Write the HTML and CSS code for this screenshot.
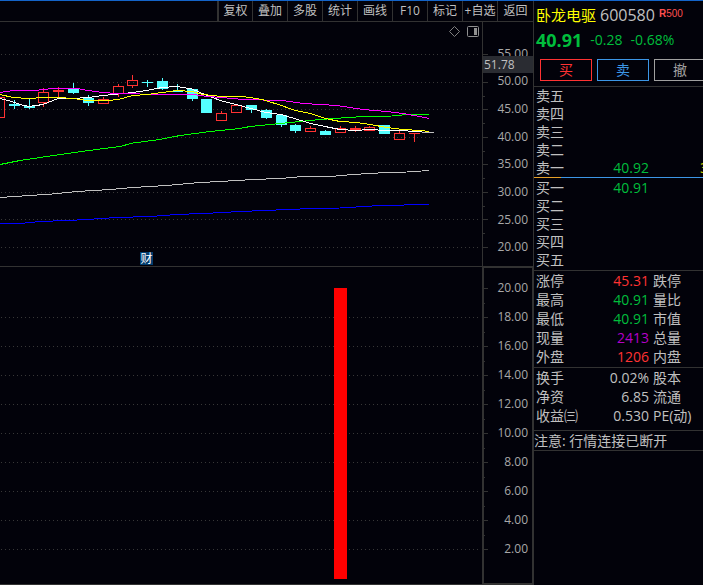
FILE: index.html
```html
<!DOCTYPE html>
<html lang="zh-CN">
<head>
    <meta charset="UTF-8">
    <meta name="viewport" content="width=device-width, initial-scale=1.0">
    <title>卧龙电驱 600580</title>
    <link rel="stylesheet" href="styles.css">
</head>
<body>
    <div class="app">
        <main class="charts">
            <nav class="toolbar">
                <button type="button">复权</button>
                <button type="button">叠加</button>
                <button type="button">多股</button>
                <button type="button">统计</button>
                <button type="button">画线</button>
                <button type="button">F10</button>
                <button type="button">标记</button>
                <button type="button">+自选</button>
                <button type="button">返回</button>
            </nav>

            <section class="pane pane-price">
                <div class="plot">
                    <svg id="priceChart" class="chart" viewBox="0 22 482 244" preserveAspectRatio="none">
                        <path class="grid-line" d="M1 54.5H479M1 82.5H479M1 109.5H479M1 137.5H479M1 164.5H479M1 192.5H479M1 219.5H479M1 247.5H479"/>
                        <g id="candles"></g>
                        <polyline class="ma ma-blue" points="0,223.5 20,223.5 40,221.5 67,220.5 87,219.5 117,217.5 150,216.5 177,214.5 213,213 240,211.5 300,209 340,208 380,205.5 429,204.5"/>
                        <polyline class="ma ma-gray" points="0,197.5 30,195.5 52,194 77,191.5 110,189.5 133,187.5 167,185.5 200,182.5 220,181.5 253,179.5 280,178.5 303,176.5 330,176.5 353,174.5 387,172.5 407,172 429,170.5"/>
                        <polyline class="ma ma-green" points="0,164.5 20,160.5 40,157.5 60,154.5 100,149 120,146.5 133,143 160,139.5 180,135.5 210,131.5 240,128.5 250,126.5 280,123.5 320,119.5 363,116.5 392,116 407,114.5 429,114.5"/>
                        <polyline class="ma ma-white" points="0,98.5 10,101 20,104.5 29,106.5 43,104.5 58,98.5 73,98.5 88,97.5 103,95.5 118,94 133,92.5 147,90.5 162,87.5 177,86.5 192,89 207,95.5 222,101 236,104.5 251,108.5 266,112.5 281,114.5 296,119 311,123.5 325,126.5 340,129.5 355,130.5 370,129.5 385,130.5 400,130.5 415,131.5 429,132.5"/>
                        <polyline class="ma ma-magenta" points="0,92.5 13,90.5 35,90.5 52,88.5 77,88.5 88,90.5 103,92.5 117,93.5 137,93.5 143,94.5 193,94.5 207,96.5 222,97.5 243,99.5 283,100.5 303,103.5 337,105.5 363,109.5 387,111.5 403,113.5 417,116 429,118.5"/>
                        <polyline class="ma ma-yellow" points="0,94.5 13,97.5 29,98.5 43,97.5 58,97.5 73,98.5 88,100.5 108,100.5 118,99.5 133,95.5 147,94.5 162,92.5 177,90.5 192,91.5 203,94.5 222,96.5 243,96.5 262,99.5 280,105 295,110.5 311,113.5 325,118.5 340,121.5 357,122.5 370,124.5 387,127.5 403,129.5 420,130.5 429,131.5"/>
                        <path class="ma ma-gray" d="M422 132.5H434"/>
                    </svg>
                    <div class="plot-tools">
                        <button type="button" aria-label="指标">
                            <svg width="11" height="11" viewBox="0 0 11 11"><path d="M5.5 .5l5 5-5 5-5-5z" fill="none" stroke="#808080"/></svg>
                        </button>
                        <button type="button" aria-label="侧栏">
                            <svg width="12" height="11" viewBox="0 0 12 11"><rect x=".5" y=".5" width="11" height="10" rx="1" fill="none" stroke="#909090"/><path d="M7 2h3v7H7z" fill="#909090"/></svg>
                        </button>
                    </div>
                    <span class="event">财</span>
                </div>
                <div class="axis">
                    <svg class="ticks" viewBox="0 22 5 244" preserveAspectRatio="none">
                        <path d="M0 54.5H5M0 82.5H5M0 109.5H5M0 137.5H5M0 164.5H5M0 192.5H5M0 219.5H5M0 247.5H5M0 96.5H2M0 123.5H2M0 151.5H2M0 178.5H2M0 206.5H2M0 233.5H2"/>
                    </svg>
                    <ul class="scale">
                        <li>55.00</li>
                        <li>50.00</li>
                        <li>45.00</li>
                        <li>40.00</li>
                        <li>35.00</li>
                        <li>30.00</li>
                        <li>25.00</li>
                        <li>20.00</li>
                    </ul>
                    <span class="cursor-price">51.78</span>
                </div>
            </section>

            <section class="pane pane-indicator">
                <div class="plot">
                    <svg class="chart" viewBox="0 267 482 317" preserveAspectRatio="none">
                        <path class="grid-line" d="M1 317.5H479M1 346.5H479M1 375.5H479M1 404.5H479M1 433.5H479M1 462.5H479M1 491.5H479M1 520.5H479M1 549.5H479"/>
                        <rect x="334" y="288" width="13" height="291" fill="#ff0000"/>
                    </svg>
                </div>
                <div class="axis">
                    <svg class="ticks" viewBox="0 268 5 315" preserveAspectRatio="none">
                        <path d="M0 288.5H4M0 317.5H4M0 346.5H4M0 375.5H4M0 404.5H4M0 433.5H4M0 462.5H4M0 491.5H4M0 520.5H4M0 549.5H4M0 303.5H1M0 332.5H1M0 361.5H1M0 390.5H1M0 419.5H1M0 448.5H1M0 477.5H1M0 506.5H1M0 535.5H1"/>
                    </svg>
                    <ul class="scale">
                        <li>20.00</li>
                        <li>18.00</li>
                        <li>16.00</li>
                        <li>14.00</li>
                        <li>12.00</li>
                        <li>10.00</li>
                        <li>8.00</li>
                        <li>6.00</li>
                        <li>4.00</li>
                        <li>2.00</li>
                    </ul>
                </div>
            </section>
        </main>

        <aside class="quote">
            <header class="quote-head">
                <h1 class="stock"><span class="stock-name">卧龙电驱</span><span class="stock-code">600580</span><span class="tag"><b>R</b>500</span></h1>
                <p class="price down"><strong>40.91</strong><span>-0.28</span><span>-0.68%</span></p>
                <div class="trade">
                    <button type="button" class="buy">买</button>
                    <button type="button" class="sell">卖</button>
                    <button type="button" class="cancel">撤</button>
                </div>
            </header>

            <table class="book asks">
                <tr><th>卖五</th><td></td><td></td></tr>
                <tr><th>卖四</th><td></td><td></td></tr>
                <tr><th>卖三</th><td></td><td></td></tr>
                <tr><th>卖二</th><td></td><td></td></tr>
                <tr><th>卖一</th><td class="down">40.92</td><td class="volume">3</td></tr>
            </table>
            <div class="ratio"></div>
            <table class="book bids">
                <tr><th>买一</th><td class="down">40.91</td><td></td></tr>
                <tr><th>买二</th><td></td><td></td></tr>
                <tr><th>买三</th><td></td><td></td></tr>
                <tr><th>买四</th><td></td><td></td></tr>
                <tr><th>买五</th><td></td><td></td></tr>
            </table>

            <table class="stats">
                <tr><th>涨停</th><td class="up">45.31</td><th>跌停</th></tr>
                <tr><th>最高</th><td class="down">40.91</td><th>量比</th></tr>
                <tr><th>最低</th><td class="down">40.91</td><th>市值</th></tr>
                <tr><th>现量</th><td class="current">2413</td><th>总量</th></tr>
                <tr><th>外盘</th><td class="up">1206</td><th>内盘</th></tr>
            </table>
            <table class="stats">
                <tr><th>换手</th><td>0.02%</td><th>股本</th></tr>
                <tr><th>净资</th><td>6.85</td><th>流通</th></tr>
                <tr><th>收益㈢</th><td>0.530</td><th>PE(动)</th></tr>
            </table>
            <p class="notice">注意: 行情连接已断开</p>
        </aside>
    </div>

    <script>
        // [center x, body top, body bottom, wick top, wick bottom, rising]
        const candles = [
            [-1, 97, 118, 97, 118, 1],
            [14, 104, 106, 100, 109, 0],
            [29, 106, 108, 99, 109, 0],
            [43, 92, 103, 88, 107, 1],
            [58, 90, 92, 87, 97, 1],
            [73, 88, 93, 83, 94, 0],
            [88, 98, 103, 95, 106, 0],
            [103, 99, 104, 97, 104, 1],
            [118, 86, 94, 84, 97, 1],
            [132, 80, 86, 75, 88, 1],
            [147, 82, 83, 80, 87, 0],
            [162, 81, 89, 78, 90, 0],
            [177, 91, 92, 84, 92, 0],
            [192, 89, 99, 89, 101, 0],
            [206, 99, 113, 99, 113, 0],
            [221, 113, 121, 111, 121, 1],
            [236, 105, 113, 105, 113, 1],
            [251, 105, 110, 105, 113, 0],
            [266, 110, 118, 109, 119, 0],
            [281, 115, 125, 115, 127, 0],
            [295, 125, 131, 124, 133, 0],
            [310, 128, 132, 126, 132, 1],
            [325, 131, 135, 130, 135, 0],
            [340, 128, 133, 126, 133, 1],
            [355, 128, 130, 126, 132, 1],
            [369, 127, 131, 126, 131, 1],
            [384, 125, 134, 125, 134, 0],
            [399, 133, 140, 131, 140, 1],
            [414, 133, 134, 133, 142, 1]
        ];

        let shapes = "";
        for (const [x, top, bottom, high, low, rising] of candles) {
            const mid = x + 0.5;
            shapes += `<path class="${rising ? "rise" : "fall"}" d="M${mid} ${high}V${top}M${mid} ${bottom}V${low}"/>`;
            if (!rising) {
                shapes += `<rect class="fall-body" x="${x - 5}" y="${top}" width="11" height="${bottom - top}"/>`;
            } else if (bottom - top < 3) {
                shapes += `<rect class="rise-flat" x="${x - 5}" y="${top}" width="11" height="${bottom - top}"/>`;
            } else {
                shapes += `<rect class="rise" x="${x - 4.5}" y="${top + 0.5}" width="10" height="${bottom - top - 1}"/>`;
            }
        }
        document.getElementById("candles").innerHTML = shapes;
    </script>
</body>
</html>
```
FILE: styles.css
```css
* { box-sizing: border-box; }
body {
    margin: 0;
    background: #02020a;
    color: #c0c0c0;
    font-family: "Open Sans", "Noto Sans CJK SC", sans-serif;
    font-size: 14px;
}
button {
    padding: 0;
    border: none;
    background: none;
    color: inherit;
    font: inherit;
    cursor: pointer;
}
h1, p, ul { margin: 0; padding: 0; }
.app {
    display: grid;
    grid-template-columns: minmax(0, 1fr) 169px;
    height: 100vh;
    border-top: 1px solid #1464c8;
}

/* Charts */
.charts {
    display: grid;
    grid-template-rows: 21px minmax(0, 245fr) minmax(0, 318fr);
}
.toolbar {
    display: flex;
    justify-content: flex-end;
    border-bottom: 1px solid #323232;
    font-size: 12px;
    line-height: 20px;
}
.toolbar button {
    width: 35px;
    border-right: 1px solid #323232;
    white-space: nowrap;
}
.toolbar button:first-child { width: 36px; border-left: 2px solid #323232; }
.toolbar button:last-child { width: 36px; }
.pane {
    display: grid;
    grid-template-columns: minmax(0, 1fr) 52px;
    min-height: 0;
}
.plot { position: relative; min-height: 0; }
.pane-price .plot, .pane-price .axis { border-bottom: 1px solid #323232; }
.pane-indicator .plot { border-bottom: 1px solid #323232; }
.chart { display: block; width: 100%; height: 100%; shape-rendering: crispEdges; }
.grid-line { stroke: #373737; stroke-dasharray: 1 3; }
.ma { fill: none; stroke-width: 1; }
.ma-white { stroke: #ffffff; }
.ma-yellow { stroke: #ffff00; }
.ma-magenta { stroke: #ff00ff; }
.ma-green { stroke: #00ff00; }
.ma-gray { stroke: #c0c0c0; }
.ma-blue { stroke: #0000ff; }
.rise { fill: none; stroke: #ff3232; }
.rise-flat { fill: #ff3232; }
.fall { stroke: #54ffff; }
.fall-body { fill: #54ffff; }
.plot-tools {
    position: absolute;
    top: 4px;
    right: 3px;
    display: flex;
    gap: 7px;
}
.plot-tools svg { display: block; }
.event {
    position: absolute;
    left: 140px;
    bottom: 1px;
    width: 13px;
    height: 13px;
    background: #003c6e;
    color: #ffffff;
    font-size: 12px;
    line-height: 13px;
    text-align: center;
}
.axis {
    position: relative;
    display: flex;
    min-height: 0;
    border-left: 1px solid #323232;
    border-right: 1px solid #323232;
}
.pane-indicator .axis { border: 2px solid #323232; border-top-width: 1px; }
.ticks { width: 5px; height: 100%; shape-rendering: crispEdges; }
.ticks path { stroke: #323232; }
.scale {
    flex: 1;
    display: flex;
    flex-direction: column;
    padding: 18px 5px 5px 0;
    list-style: none;
    font-size: 12px;
    text-align: right;
    color: #a8a8a8;
}
.pane-indicator .scale { padding: 5px 4px 20px 0; }
.scale li {
    flex: 1;
    display: flex;
    align-items: center;
    justify-content: flex-end;
    line-height: 16px;
}
.cursor-price {
    position: absolute;
    top: 34px;
    left: 0;
    right: 0;
    padding-left: 1px;
    background: #2a2c32;
    font-size: 12px;
    line-height: 17px;
}

/* Quote panel */
.quote { overflow: hidden; }
.quote-head {
    height: 86px;
    padding: 3px 0 0 2px;
    border-bottom: 1px solid #323232;
    white-space: nowrap;
}
.stock {
    display: flex;
    gap: 4px;
    font-size: 15px;
    font-weight: normal;
    line-height: 22px;
}
.stock-name { color: #ffff00; }
.stock-code { font-size: 16px; }
.tag {
    color: #ff5050;
    font-family: "Liberation Sans", sans-serif;
    font-size: 10px;
    line-height: 20px;
}
.price {
    display: flex;
    gap: 8px;
    line-height: 28px;
}
.price strong { font-size: 18px; }
.trade {
    display: flex;
    gap: 5px;
    padding: 5px 0 0 4px;
}
.trade button {
    flex: 0 0 52px;
    height: 22px;
    border: 1px solid;
    line-height: 20px;
}
.buy { color: #ff3232; }
.sell { color: #3c96e6; }
.cancel { color: #a0a0a0; }
.up { color: #ff3232; }
.down { color: #00be3c; }
.current { color: #b400c8; }
.volume { color: #c8c800; }
table {
    width: 100%;
    table-layout: fixed;
    border-collapse: separate;
    border-spacing: 0;
}
th, td { padding: 0; font-weight: normal; white-space: nowrap; }
th { width: 51px; padding-left: 2px; text-align: left; }
td { width: 64px; text-align: right; }
.book { line-height: 18px; }
.book tr { height: 18px; }
.book td:last-child { width: auto; padding-left: 51px; text-align: left; }
.ratio {
    height: 1px;
    margin-bottom: 1px;
    background: linear-gradient(to right, #e6a028 16%, #3c96e6 16%);
}
.stats {
    margin-top: 1px;
    border-top: 1px solid #323232;
    line-height: 19px;
}
.stats tr { height: 19px; }
.stats th:last-child { width: auto; padding-left: 4px; }
.notice {
    margin-top: 5px;
    border: solid #323232;
    border-width: 1px 0;
    line-height: 19px;
    white-space: nowrap;
}
```
